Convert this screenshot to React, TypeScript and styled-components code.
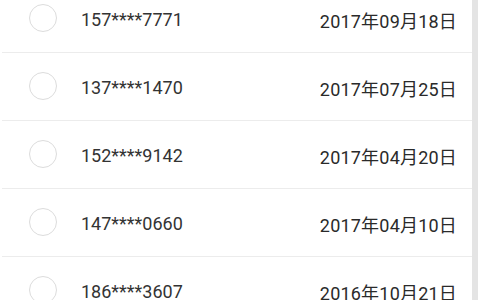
import React from "react";
import styled, { createGlobalStyle } from "styled-components";

const Global = createGlobalStyle`
  html, body { margin: 0; padding: 0; background: #fff; }
  body { font-family: Roboto, "Noto Sans CJK SC", sans-serif; }
`;

const Screen = styled.div`
  width: 480px;
  height: 300px;
  overflow: hidden;
  display: flex;
  background: #fff;
`;

const Viewport = styled.div`
  flex: 0 0 470px;
  margin-left: 2px;
  height: 300px;
  overflow: hidden;
`;

const List = styled.ul`
  list-style: none;
  margin: -15px 0 0 0;
  padding: 0;
`;

const Row = styled.li`
  height: 67px;
  display: flex;
  align-items: center;
  border-bottom: 1px solid #ececec;
  padding: 0 15px 0 27px;
`;

const Radio = styled.span`
  width: 26px;
  height: 26px;
  border-radius: 50%;
  border: 1.5px solid #dcdcdc;
  flex: 0 0 auto;
  margin-top: -2px;
`;

const Phone = styled.span`
  margin-left: 24px;
  padding-top: 2px;
  font-family: Roboto, sans-serif;
  font-size: 18px;
  color: #333;
  flex: 1;
`;

const DateText = styled.span`
  padding-top: 2px;
  font-family: Roboto, "Noto Sans CJK SC", sans-serif;
  font-size: 18px;
  letter-spacing: 0.2px;
  color: #2a2a2a;
`;

const Scrollbar = styled.div`
  flex: 0 0 6px;
  height: 300px;
  background: #e4e4e4;
`;

const rows = [
  { phone: "157****7771", date: "2017年09月18日" },
  { phone: "137****1470", date: "2017年07月25日" },
  { phone: "152****9142", date: "2017年04月20日" },
  { phone: "147****0660", date: "2017年04月10日" },
  { phone: "186****3607", date: "2016年10月21日" },
];

export default function App() {
  return (
    <>
      <Global />
      <Screen>
        <Viewport>
          <List>
            {rows.map((r) => (
              <Row key={r.phone}>
                <Radio />
                <Phone>{r.phone}</Phone>
                <DateText>{r.date}</DateText>
              </Row>
            ))}
          </List>
        </Viewport>
        <Scrollbar />
      </Screen>
    </>
  );
}
